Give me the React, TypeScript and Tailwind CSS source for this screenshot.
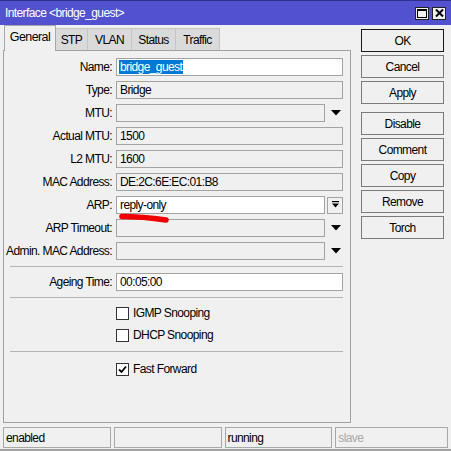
import React from "react";

const font = { fontFamily: '"Liberation Sans", Arial, sans-serif' };

function Arrow() {
  return (
    <svg width="10" height="6" viewBox="0 0 10 6">
      <polygon points="0,0 10,0 5,5.5" fill="#000" />
    </svg>
  );
}

function Row({
  label,
  value,
  editable,
  kind,
  selected,
  className,
}: {
  label: string;
  value?: string;
  editable?: boolean;
  kind?: "full" | "arrow" | "button";
  selected?: boolean;
  className?: string;
}) {
  const k = kind ?? "full";
  return (
    <div className={"flex items-center h-[18px] " + (className ?? "")}>
      <div className="w-[109px] text-right pr-[1px] whitespace-nowrap">{label}</div>
      <div
        className={
          "ml-[3px] h-[18px] border border-[#a3a3a3] flex items-center pl-[2px] leading-[16px] whitespace-nowrap overflow-hidden " +
          (editable ? "bg-white " : "bg-[#f0f0f0] ") +
          (k === "full" ? "w-[227px]" : "w-[209px]")
        }
      >
        {value !== undefined && (
          <span className={selected ? "bg-[#0078d7] text-white px-[1px] leading-[14px]" : "px-[1px]"}>{value}</span>
        )}
      </div>
      {k === "arrow" && (
        <div className="w-[21px] flex justify-center items-center">
          <Arrow />
        </div>
      )}
      {k === "button" && (
        <div className="ml-[2px] w-[16px] h-[17px] border border-[#a3a3a3] bg-[#f0f0f0] flex flex-col items-center justify-center">
          <svg width="9" height="8" viewBox="0 0 9 8">
            <rect x="1" y="0" width="7" height="1.2" fill="#000" />
            <polygon points="1,2.5 8,2.5 4.5,6.5" fill="#000" />
          </svg>
        </div>
      )}
    </div>
  );
}

function Check({ label, checked, className }: { label: string; checked?: boolean; className?: string }) {
  return (
    <div className={"flex items-center h-[18px] " + (className ?? "")}>
      <div className="ml-[112px] w-[13px] h-[13px] border border-[#333] bg-white flex items-center justify-center">
        {checked && (
          <svg width="9" height="9" viewBox="0 0 9 9">
            <path d="M1 4.5 L3.5 7 L8 1.5" stroke="#000" strokeWidth="1.8" fill="none" />
          </svg>
        )}
      </div>
      <div className="ml-[4px]">{label}</div>
    </div>
  );
}

function Btn({ label, className, def }: { label: string; className?: string; def?: boolean }) {
  return (
    <div
      className={
        "h-[23px] w-[83px] flex items-center justify-center bg-[#f0f0f0] border " +
        (def ? "border-[#1a1a1a] " : "border-[#7a7a7a] ") +
        (className ?? "")
      }
    >
      {label}
    </div>
  );
}

function Sep({ className }: { className?: string }) {
  return <div className={"ml-[6px] w-[333px] h-px bg-[#b4b4b4] " + (className ?? "")} />;
}

export default function App() {
  return (
    <div
      className="relative w-[451px] h-[451px] bg-[#f0f0f0] flex flex-col overflow-hidden text-[12px] tracking-[-0.6px] text-black border-b-2 border-[#a0a0a0]"
      style={font}
    >
      {/* Title bar */}
      <div className="h-[25px] bg-[#5252d0] border-t border-[#2e2e8a] flex items-center pl-[5px] pr-[5px] text-white shrink-0">
        <span>Interface &lt;bridge_guest&gt;</span>
        <div className="ml-auto flex gap-[3px]">
          <div className="w-[14px] h-[13px] bg-[#f0f0f0] border border-[#222] flex items-center justify-center">
            <svg width="10" height="9" viewBox="0 0 10 9">
              <rect x="0.5" y="0.5" width="9" height="8" fill="none" stroke="#000" strokeWidth="1" />
              <rect x="0.5" y="0.5" width="9" height="1.5" fill="#000" />
            </svg>
          </div>
          <div className="w-[14px] h-[13px] bg-[#f0f0f0] border border-[#222] flex items-center justify-center">
            <svg width="9" height="8" viewBox="0 0 9 8">
              <path d="M1 0.5 L8 7.5 M8 0.5 L1 7.5" stroke="#000" strokeWidth="2" />
            </svg>
          </div>
        </div>
      </div>

      {/* Body */}
      <div className="flex flex-1 min-h-0">
        <div className="ml-[3px] w-[348px] flex flex-col">
          {/* Tabs */}
          <div className="h-[25px] flex items-end shrink-0 relative z-10">
            <div className="ml-[1px] w-[52px] h-[26px] -mb-px bg-[#f0f0f0] border border-b-0 border-[#a8a8a8] flex items-center justify-center pb-[2px] text-[12.5px]">
              General
            </div>
            <div className="w-[32px] h-[22px] bg-[#dadada] border border-b-0 border-l-0 border-[#c4c4c4] flex items-center justify-center">
              STP
            </div>
            <div className="w-[44px] h-[22px] bg-[#dadada] border border-b-0 border-l-0 border-[#c4c4c4] flex items-center justify-center">
              VLAN
            </div>
            <div className="w-[44px] h-[22px] bg-[#dadada] border border-b-0 border-l-0 border-[#c4c4c4] flex items-center justify-center">
              Status
            </div>
            <div className="w-[44px] h-[22px] bg-[#dadada] border border-b-0 border-l-0 border-[#c4c4c4] flex items-center justify-center">
              Traffic
            </div>
          </div>

          {/* Panel */}
          <div className="flex-1 border border-[#a0a0a0] flex flex-col pt-[7px] relative">
            <Row label="Name:" value="bridge_guest" editable selected />
            <Row label="Type:" value="Bridge" className="mt-[5px]" />
            <Row label="MTU:" kind="arrow" className="mt-[5px]" />
            <Row label="Actual MTU:" value="1500" className="mt-[5px]" />
            <Row label="L2 MTU:" value="1600" className="mt-[5px]" />
            <Row label="MAC Address:" value="DE:2C:6E:EC:01:B8" className="mt-[5px]" />
            <Row label="ARP:" value="reply-only" editable kind="button" className="mt-[5px]" />
            <Row label="ARP Timeout:" kind="arrow" className="mt-[5px]" />
            <Row label="Admin. MAC Address:" kind="arrow" className="mt-[5px]" />
            <Sep className="mt-[6px]" />
            <Row label="Ageing Time:" value="00:05:00" editable className="mt-[6px]" />
            <Sep className="mt-[6px]" />
            <Check label="IGMP Snooping" className="mt-[6px]" />
            <Check label="DHCP Snooping" className="mt-[4px]" />
            <Sep className="mt-[7px]" />
            <Check label="Fast Forward" checked className="mt-[8px]" />

            {/* red scribble */}
            <svg className="absolute left-[110px] top-[161px]" width="60" height="14" viewBox="0 0 60 14">
              <path d="M8 4.5 Q 28 4.5 52 8" stroke="#f20000" strokeWidth="5.5" strokeLinecap="round" fill="none" />
            </svg>
          </div>
        </div>

        {/* Buttons */}
        <div className="ml-[10px] pt-[4px] flex flex-col">
          <Btn label="OK" def />
          <Btn label="Cancel" className="mt-[3px]" />
          <Btn label="Apply" className="mt-[3px]" />
          <Btn label="Disable" className="mt-[8px]" />
          <Btn label="Comment" className="mt-[3px]" />
          <Btn label="Copy" className="mt-[3px]" />
          <Btn label="Remove" className="mt-[3px]" />
          <Btn label="Torch" className="mt-[3px]" />
        </div>
      </div>

      {/* Status bar */}
      <div className="mt-[4px] mb-[1px] h-[21px] flex px-[3px] shrink-0">
        <div className="w-[108px] border border-[#a8a8a8] flex items-center pl-[2px]">enabled</div>
        <div className="ml-[3px] w-[108px] border border-[#a8a8a8]" />
        <div className="ml-[3px] w-[108px] border border-[#a8a8a8] flex items-center pl-[2px]">running</div>
        <div className="ml-[3px] w-[113px] border border-[#a8a8a8] flex items-center pl-[2px] text-[#a8a8a8]">slave</div>
      </div>
    </div>
  );
}
